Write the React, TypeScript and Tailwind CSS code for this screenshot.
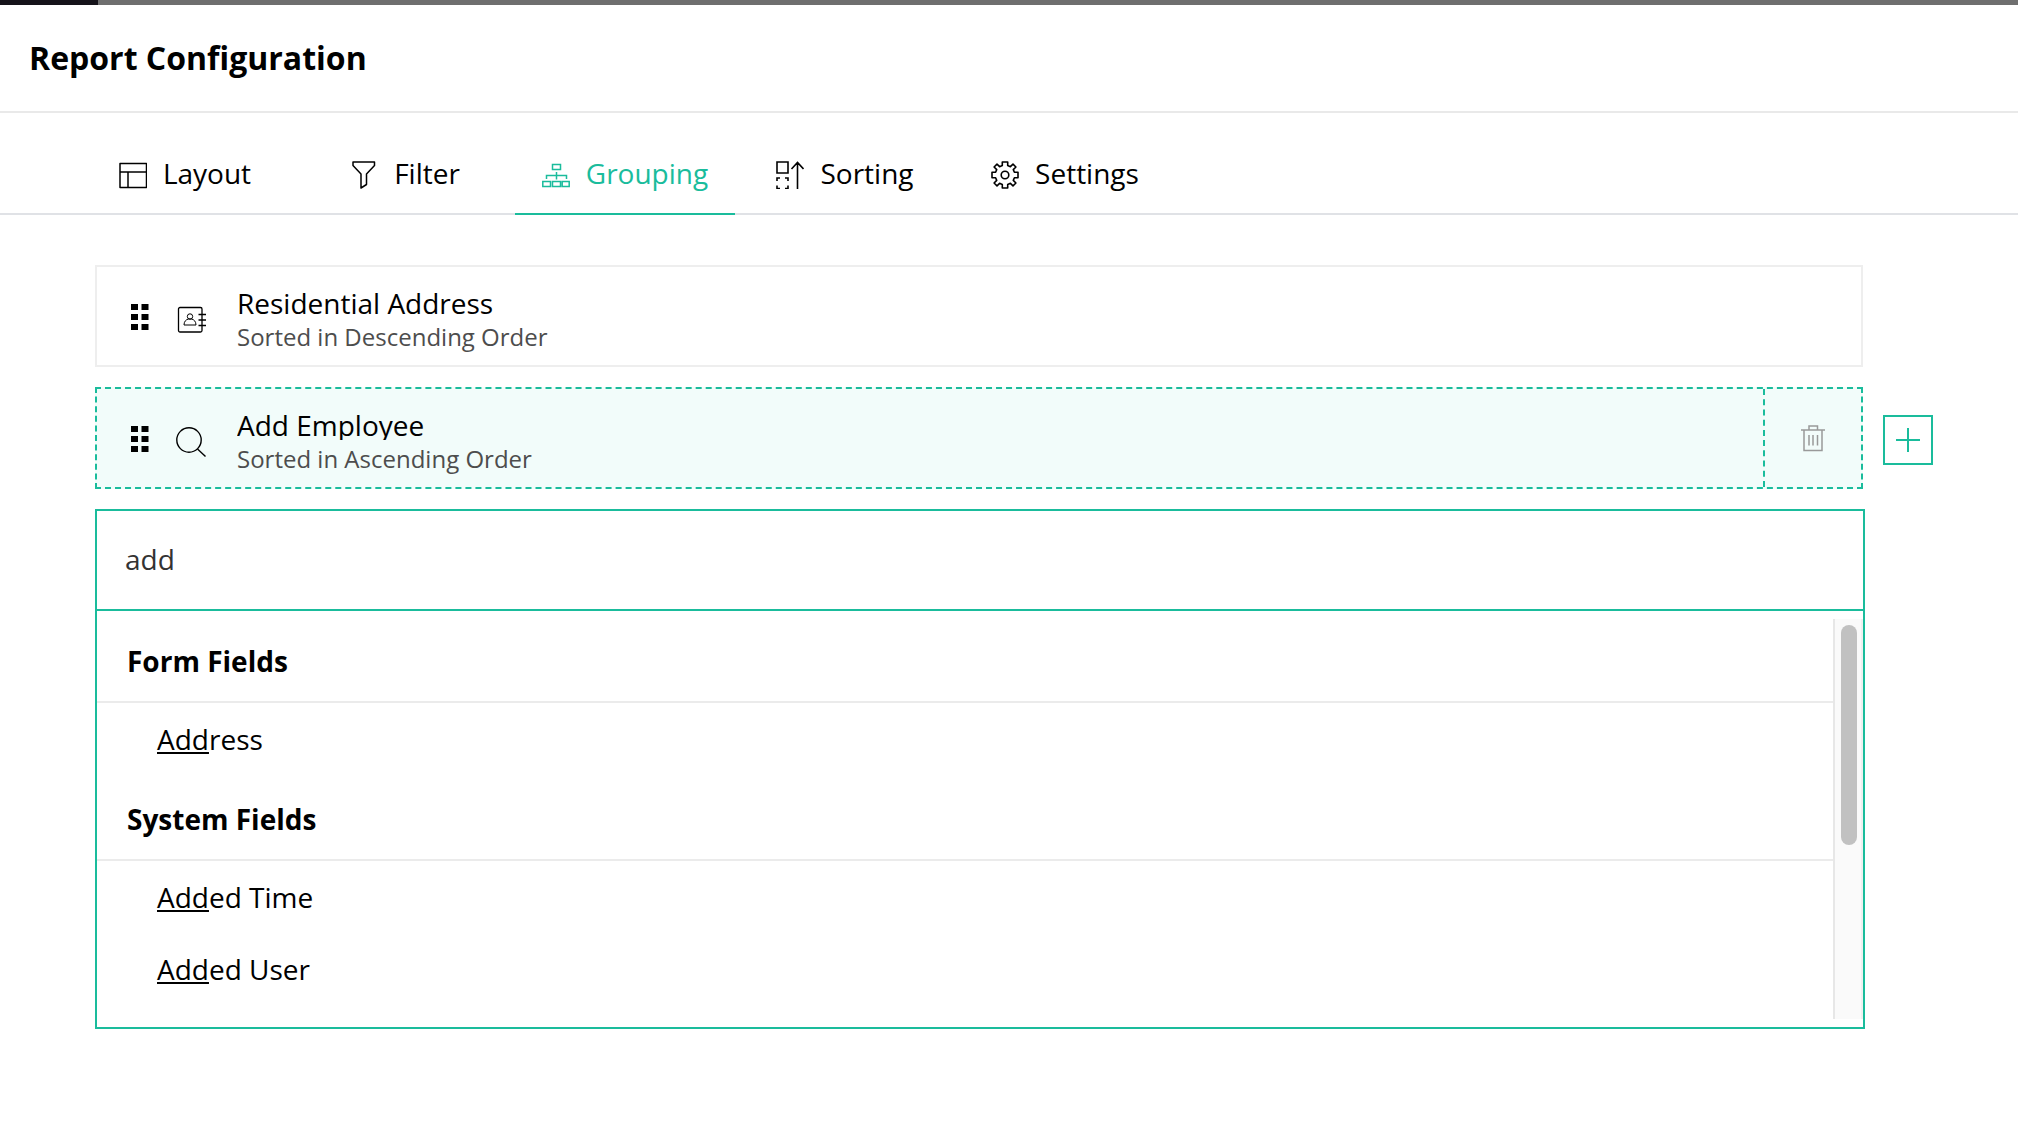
import { useState } from "react";
import type { ReactNode } from "react";

function LayoutIcon() {
  return (
    <svg width="28" height="28" viewBox="0 0 28 28" fill="none" stroke="currentColor" strokeWidth="1.5" strokeLinejoin="round" aria-hidden="true">
      <path d="M1 2.5h26.5v24H1zM1 11h26.5M9 11v15.5" />
    </svg>
  );
}

function FilterIcon() {
  return (
    <svg width="28" height="28" viewBox="0 0 28 28" fill="none" stroke="currentColor" strokeWidth="1.5" strokeLinejoin="round" aria-hidden="true">
      <path d="M3 1h21.5v3.5L16.5 13v10.5L11 27V13L3 4.500z" />
    </svg>
  );
}

function GroupingIcon() {
  return (
    <svg width="28" height="28" viewBox="0 0 28 28" fill="none" stroke="currentColor" strokeWidth="1.5" aria-hidden="true">
      <path d="M10.500 3.500h8v5h-8zM14.500 11v7.500M4.500 18v-3.500h20V18M.8 20.500h7.700v5H.8zM10.500 20.500h8v5h-8zM20.200 20.500h7v5h-7z" />
    </svg>
  );
}

function SortingIcon() {
  return (
    <svg width="28" height="28" viewBox="0 0 28 28" fill="none" stroke="currentColor" strokeWidth="1.600" aria-hidden="true">
      <path d="M1 1h11v11H1zM1 20v-3h3M9 17h3v3M12 24.500v3H9M4 27.500H1v-3M21.500 28V2M15.500 8l6-6.500 6 6.500" />
    </svg>
  );
}

function SettingsIcon() {
  return (
    <svg width="28" height="28" viewBox="0 0 28 28" fill="none" stroke="currentColor" strokeWidth="1.600" strokeLinejoin="round" aria-hidden="true">
      <path d="M11.300 1h5.400v3.600l2.700 1.100L22 3.200 24.900 6l-2.600 2.600 1.100 2.700H27v5.400h-3.600l-1.100 2.700 2.600 2.600-2.900 2.800-2.600-2.500-2.700 1.100V27h-5.400v-3.600l-2.700-1.100L6 24.800 3.100 22l2.600-2.600-1.100-2.700H1v-5.400h3.600l1.100-2.700L3.100 6 6 3.200l2.600 2.500 2.700-1.100z" />
      <circle cx="14" cy="14" r="3.800" />
    </svg>
  );
}

function GripIcon() {
  return (
    <svg width="18" height="28" viewBox="0 0 18 28" fill="currentColor" aria-hidden="true">
      <path d="M0 1h7v6H0zM10.500 1h7v6h-7zM0 11h7v6H0zM10.500 11h7v6h-7zM0 21h7v6H0zM10.500 21h7v6h-7z" />
    </svg>
  );
}

function AddressBookIcon() {
  return (
    <svg width="30" height="30" viewBox="0 0 30 30" fill="none" stroke="currentColor" aria-hidden="true">
      <rect x="2.500" y="2.500" width="23.500" height="24.500" rx="1.500" strokeWidth="1.300" />
      <path d="M22.500 9.500h7.500M22.500 15h7.500M22.500 20.500h7.500" strokeWidth="1.300" />
      <circle cx="14" cy="11.500" r="2.700" strokeWidth="1" />
      <path d="M8 20c0-3.500 2-5.500 4.500-6h3c2.500.5 4.500 2.500 4.500 6z" strokeWidth="1" />
    </svg>
  );
}

function SearchIcon() {
  return (
    <svg width="30" height="30" viewBox="0 0 30 30" fill="none" stroke="currentColor" strokeWidth="1.400" aria-hidden="true">
      <circle cx="13" cy="13" r="12.200" />
      <path d="M21.500 22l8 7.500" />
    </svg>
  );
}

function TrashIcon() {
  return (
    <svg width="24" height="28" viewBox="0 0 24 28" fill="none" stroke="currentColor" strokeWidth="1.500" aria-hidden="true">
      <path d="M0 6h24M8 6V2h8.500v4M3 6v20.500h18V6M8 11v10.500M12 11v10.500M16.500 11v10.500" />
    </svg>
  );
}

const tabs: { name: string; icon: ReactNode }[] = [
  { name: "Layout", icon: <LayoutIcon /> },
  { name: "Filter", icon: <FilterIcon /> },
  { name: "Grouping", icon: <GroupingIcon /> },
  { name: "Sorting", icon: <SortingIcon /> },
  { name: "Settings", icon: <SettingsIcon /> },
];

function FieldSummary({ icon, title, order }: { icon: ReactNode; title: string; order: string }) {
  return (
    <div className="flex min-w-0 flex-1 pl-[34px]">
      <button type="button" aria-label={"Reorder " + title} className="mt-0.5 cursor-grab self-center">
        <GripIcon />
      </button>
      <span className="mt-2 ml-[27px] self-center">{icon}</span>
      <div className="ml-[31px] pt-5 pb-3">
        <h2 className="h-[31px] overflow-hidden text-[28px] leading-8">{title}</h2>
        <p className="mt-[3px] text-2xl leading-8 text-[#4d4d4d]">{order}</p>
      </div>
    </div>
  );
}

function Suggestion({ match, rest }: { match: string; rest: string }) {
  return (
    <li>
      <button type="button" className="block w-full pl-[60px] text-left leading-[72px]">
        <span className="underline decoration-2 underline-offset-2">{match}</span>
        {rest}
      </button>
    </li>
  );
}

function SuggestionGroup({ title, children }: { title: string; children: ReactNode }) {
  return (
    <section>
      <h3 className="border-b-2 border-[#ebebeb] pt-1 pl-[30px] leading-[80px] font-bold">{title}</h3>
      <ul>{children}</ul>
    </section>
  );
}

export default function App() {
  const [active, setActive] = useState("Grouping");
  const [query, setQuery] = useState("add");

  return (
    <div className="min-h-screen bg-white font-['Open_Sans',sans-serif] text-[28px] text-black">
      <div className="h-[5px] bg-[#6f6f6f]">
        <div className="h-full w-[98px] bg-[#15131a]" />
      </div>
      <header className="border-b-2 border-[#e9e9e9] px-[29px]">
        <h1 className="text-[32px] leading-[106px] font-bold">Report Configuration</h1>
      </header>

      <nav className="flex border-b-2 border-[#e0e2e6] pl-[75px]" role="tablist">
        {tabs.map((tab) => (
          <button
            key={tab.name}
            type="button"
            role="tab"
            aria-selected={active === tab.name}
            onClick={() => setActive(tab.name)}
            className={
              "-mb-0.5 flex w-[220px] items-center justify-center gap-4 border-b-2 pt-[22px] pb-0.5 leading-[76px] " +
              (active === tab.name ? "border-[#1abc9c] text-[#1abc9c]" : "border-transparent")
            }
          >
            <span className="mt-1">{tab.icon}</span>
            {tab.name}
          </button>
        ))}
      </nav>

      <main className="flex flex-col gap-5 pt-[50px] pr-[155px] pb-10 pl-[95px]">
        <div className="flex border-2 border-[#eeeeee]">
          <FieldSummary icon={<AddressBookIcon />} title="Residential Address" order="Sorted in Descending Order" />
        </div>

        <div className="-mr-[70px] flex items-center gap-5">
          <div className="flex min-w-0 flex-1 border-2 border-dashed border-[#1abc9c] bg-[#f2fcfa]">
            <FieldSummary icon={<SearchIcon />} title="Add Employee" order="Sorted in Ascending Order" />
            <button
              type="button"
              aria-label="Delete Add Employee"
              className="flex w-[98px] items-center justify-center border-l-2 border-dashed border-[#1abc9c] text-[#999999]"
            >
              <TrashIcon />
            </button>
          </div>
          <button
            type="button"
            aria-label="Add grouping field"
            className="mt-1 flex size-[50px] items-center justify-center border-2 border-[#1abc9c] text-[#1abc9c]"
          >
            <svg width="24" height="24" viewBox="0 0 24 24" stroke="currentColor" strokeWidth="2" aria-hidden="true">
              <path d="M12 0v24M0 12h24" />
            </svg>
          </button>
        </div>

        <div className="-mr-0.5 border-2 border-[#1abc9c]">
          <input
            type="text"
            aria-label="Search fields"
            value={query}
            onChange={(e) => setQuery(e.target.value)}
            className="block h-[100px] w-full border-b-2 border-[#1abc9c] px-7 pb-0.5 text-[#333333] outline-none"
          />
          <div className="flex py-2">
            <div className="-mt-0.5 min-w-0 flex-1 pb-3.5">
              <SuggestionGroup title="Form Fields">
                <Suggestion match="Add" rest="ress" />
              </SuggestionGroup>
              <SuggestionGroup title="System Fields">
                <Suggestion match="Add" rest="ed Time" />
                <Suggestion match="Add" rest="ed User" />
              </SuggestionGroup>
            </div>
            <div className="w-[30px] border-x-2 border-r-[#f0f0f0] border-l-[#e7e7e7] bg-[#fafafa] pt-1.5 pl-1.5">
              <div className="h-[220px] w-4 rounded-full bg-[#c1c1c1]" />
            </div>
          </div>
        </div>
      </main>
    </div>
  );
}
